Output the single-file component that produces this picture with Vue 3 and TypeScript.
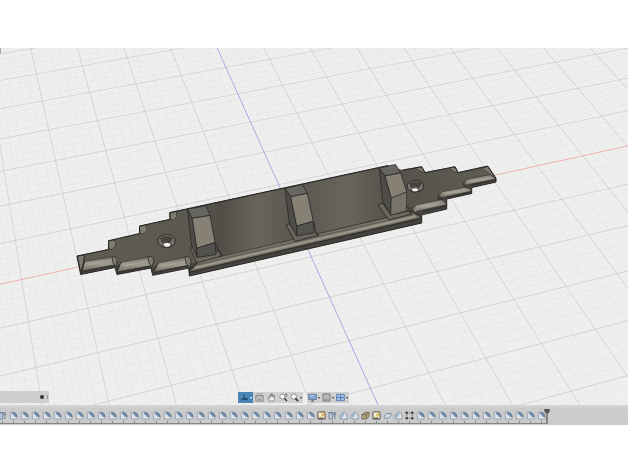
<script setup lang="ts">
interface GridLine { d: string; kind: 'fine' | 'minor' | 'major' }
type Feature = 'fillet' | 'extrude' | 'sketch' | 'chamfer' | 'box' | 'plane' | 'pattern'

// Ground plane projected to the view: u runs along the red axis, v along the blue one.
function project(u: number, v: number): string {
  const w = 1 + 0.01153 * u - 0.03678 * v
  const x = (294.4 + 54.79 * u + 5.4 * v) / w
  const y = (219.4 - 8.8 * u + 27.945 * v) / w
  return `${x.toFixed(2)} ${y.toFixed(2)}`
}

function segment(u1: number, v1: number, u2: number, v2: number): string {
  return `M${project(u1, v1)}L${project(u2, v2)}`
}

const gridLines: GridLine[] = []
for (let i = -140; i <= 140; i++) {
  const kind = i % 10 === 0 ? 'major' : i % 2 === 0 ? 'minor' : 'fine'
  const t = i / 10
  if (i === 0) continue
  gridLines.push({ d: segment(t, -14, t, 9), kind })
  if (i <= 90) gridLines.push({ d: segment(-14, t, 14, t), kind })
}
const redAxis = segment(-14, 0, 14, 0)
const blueAxis = segment(0, -14, 0, 9)

const features: Feature[] = [
  'extrude',
  ...Array<Feature>(28).fill('fillet'),
  'sketch', 'extrude', 'chamfer', 'chamfer', 'box', 'sketch', 'plane', 'chamfer', 'pattern',
  ...Array<Feature>(12).fill('fillet'),
]
</script>

<template>
  <main class="app">
    <section class="viewport" aria-label="Model view">
      <svg class="scene" viewBox="0 48 628 357" preserveAspectRatio="xMidYMid slice" aria-hidden="true">
        <defs>
          <linearGradient id="plate" x1="0" y1="0" x2="1" y2="0">
            <stop offset="0" stop-color="#605c54" />
            <stop offset=".28" stop-color="#5b5850" />
            <stop offset=".34" stop-color="#504d47" />
            <stop offset=".43" stop-color="#68645b" />
            <stop offset=".53" stop-color="#595650" />
            <stop offset=".65" stop-color="#69655c" />
            <stop offset=".75" stop-color="#54514a" />
            <stop offset="1" stop-color="#605d55" />
          </linearGradient>
          <linearGradient id="bevel" x1="0" y1="0" x2="0" y2="1">
            <stop offset="0" stop-color="#77736a" />
            <stop offset=".5" stop-color="#a19c90" />
            <stop offset="1" stop-color="#6f6b62" />
          </linearGradient>
        </defs>

        <g class="grid">
          <path v-for="(line, i) in gridLines" :key="i" :d="line.d" :class="line.kind" />
          <path :d="redAxis" class="red" />
          <path :d="blueAxis" class="blue" />
        </g>
        <path d="M0 48h1v6H0z" fill="#aaa" />

        <g class="model">
          <path class="side" d="M76.7 256 108.5 249.3 108.3 240.7 139.5 233.5 139.3 226 170 219.3 169.3 212.5 388 165.5 401 169.8 421.7 166.7 425 172.5 455 166.7 458.3 172.5 487.7 166 496 178.3 496 182 471.7 187.5V193.5L446.7 199V209L421.7 214.5V223L189.3 276 188 268 152.7 275.3 151 268 117 274.5 115 267.5 80.7 274.5z" />
          <path fill="url(#plate)" d="M77.5 256.3 109.5 250 109 241.3 140.5 234 140 226.6 171 220 170.3 213.3 388 166.5 402 170.5 421 167.6 425 173.4 454 167.7 458 173.4 487 167.2 494 176 466 182 463 189 440 193 436 202 416 206 412 211 202 261 188 264 185 260 152 267 147 259 118 265 113 257 84 263z" />

          <g class="corner">
            <path d="M77.5 256.2 84.5 255 82 269 80.5 270.5z" />
            <path d="M108.5 241 114.5 240 116 245 112 249.5 108.8 249z" />
            <path d="M139.5 226.5 146 225 147 231 143 234 139.8 233.3z" />
            <path d="M169.7 213 176.5 211.5 176.5 217 173 220.5 170.3 219z" />
            <path d="M415 168 421.7 167 425 172.5 422 172z" />
            <path d="M449 168 454.7 167 458 172.5 455 172.5z" />
            <path d="M482 168 487.5 166.7 496 178.5 491 175z" />
          </g>

          <g class="bevel">
            <path d="M84.7 261.5 113.5 256.5 118.5 258.5 116.5 264.5 82.3 271z" />
            <path d="M121 262.5 149 256.8 154 259 152 265.5 117.3 272z" />
            <path d="M158.5 263 186.5 257 191 259.5 190 265 153.5 272z" />
            <path class="long" d="M199 261.5 412 212 421.5 217.7 189.5 271.8z" />
            <path d="M413 208.5 417 204.8 442 199.2 446.7 204.5 418 211 414 213z" />
            <path d="M438.5 196 442 192 467 186.5 471.7 191 443 197.5z" />
            <path d="M464 183.5 467 179.5 490 174.5 496 178.8 466 185.2z" />
          </g>
          <path class="shine" d="M88 264.5 114 259.5M124 266 149 260.5M161 266.5 187 261M420 207 440 202.5M445 194 466 189.3M468 182.5 490 177.5" />
          <path class="shine broad" d="M195 267.7 416 216.2" />
          <g class="joint">
            <path d="M112 256Q116 256 117 260L116 267 113 263z" />
            <path d="M148 256Q153 256 154 260L152 267 149 263z" />
            <path d="M185 256.5Q190 256 191 260L190 268 186 263z" />
            <path d="M412 207Q409 210 414 213L420 215M438 194Q437 199 443 200M464 182Q462 187 468 188" />
            <path d="M84.5 255 84 263 81 271M121 262 117 270M158 263 154 271M199 261 190 270" />
          </g>
          <path class="edge" d="M189.5 272.3 421.5 218.3M81 272 115 265M117 272.5 150 266M153 273 187 266M422 212 446.5 206M447 197.5 471.5 191.8M472 185 496 179.5" />
          <path class="edge thin" d="M196 265 413 214.4" />
          <path class="edge strong" d="M77 256 108.5 249.5V240.7L139.5 233.5V226L170 219.3V212.5L388 165.5M403 170 421.7 166.7 425 172.5 455 166.7 458.3 172.5 487.7 166 496 178.3V182L471.7 187.5V193.5L446.7 199V209L421.7 215V223L189.3 276V268L152.7 275.3 151 268 117 274.5 115 267.5 80.7 274.5 77 256" />

          <g class="hole">
            <ellipse cx="166.5" cy="241" rx="8.7" ry="6.5" />
            <path d="M160 238Q166 234 173 238L170 243Q166 240 162 243z" />
            <ellipse class="through" cx="167" cy="244.8" rx="4" ry="2.6" />
            <ellipse cx="415.3" cy="186.2" rx="8.3" ry="5.8" />
            <path d="M409 183Q415 180 422 183L419 188Q415 185 411 188z" />
            <ellipse class="through" cx="415" cy="189.8" rx="3.6" ry="2.2" />
          </g>

          <g class="post">
            <path class="collar" d="M190 247 193 245 198 256 219.5 251 222 256 196.5 263z" />
            <path class="left" d="M187.5 209.3 192.3 218.3 196.7 248.3 197.3 257.5 191.7 246z" />
            <path class="top" d="M187.5 209.3 206 205.7 210 215.5 192.3 218.3z" />
            <path class="front" d="M192.3 218.3 210 215.5 215 242.5 196.7 248.3z" />
            <path class="under" d="M196.7 248.3 215 242.5 216 254.5 197.3 257.5z" />
            <path class="rib" d="M215 243 221.5 256.5" />
          </g>
          <g class="post">
            <path class="collar" d="M286 225 290 223.5 297 235 314 231.5 319 235 295 241.5z" />
            <path class="left" d="M285 188.3 290.7 196.7 296.7 226 296.7 236 289.3 223.5z" />
            <path class="top" d="M285 188.3 302.3 184.5 307.3 193.3 290.7 196.7z" />
            <path class="front" d="M290.7 196.7 307.3 193.3 313.3 221.3 296.7 226z" />
            <path class="under" d="M296.7 226 313.3 221.3 314 232.7 296.7 236z" />
            <path class="rib" d="M313.5 222 317 235" />
          </g>
          <g class="post">
            <path class="collar" d="M378 205 382.5 203 391 215 408 211 412 214 389 220z" />
            <path class="left" d="M379.3 168 385 176 391.3 198 390.7 215 382.7 201.5z" />
            <path class="top" d="M379.3 168 395.5 164.5 400.7 172.8 385 176z" />
            <path class="front" d="M385 176 400.7 172.8 406.7 192 391.3 198z" />
            <path class="under lit" d="M391.3 198 406.7 192 406.3 211 390.7 215z" />
            <path class="rib" d="M407 206 411 213" />
          </g>
        </g>
      </svg>

      <aside class="comments" aria-label="Comments">
        <button class="dot" aria-label="Options"></button>
        <i class="grip"></i>
      </aside>

      <nav class="navigation" aria-label="Navigation">
        <div class="tools">
          <button class="orbit" aria-label="Orbit">
            <svg viewBox="0 0 10 10"><path d="M4.5 1v7M2 6.5h6M1 8l3-2 3 2" stroke="#15395c" stroke-width=".8" fill="none" /><path d="m7 5 2 2-2 1z" fill="#18334d" /></svg>
            <i class="caret light"></i>
          </button>
          <button aria-label="Look at">
            <svg viewBox="0 0 10 10"><path d="M1 3h8v6H1zM2 1h2M6 1h2M3 4.5h1M6 4.5h1M3 7h4" stroke="#777" fill="none" /></svg>
          </button>
          <button aria-label="Pan">
            <svg viewBox="0 0 10 10"><path d="M3 9 1 5l1-.5L3.3 6V2h1v2-3h1.2v3-2.5h1.2V5l.6-2h1v4L7 9z" fill="#f5f5f5" stroke="#666" stroke-width=".7" /></svg>
          </button>
          <button aria-label="Zoom">
            <svg viewBox="0 0 10 10"><circle cx="3.7" cy="4" r="2.8" fill="#f8f8f8" stroke="#888" /><path d="m6 6 3 3" stroke="#333" stroke-width="1.5" /><path d="M8 1v4M7 2l1-1 1 1" stroke="#444" fill="none" stroke-width=".7" /></svg>
          </button>
          <button class="wide" aria-label="Fit">
            <svg viewBox="0 0 10 10"><circle cx="4.2" cy="4" r="3" fill="#fafafa" stroke="#888" /><path d="m6 6 3 3" stroke="#333" stroke-width="1.7" /></svg>
            <i class="caret"></i>
          </button>
        </div>
        <div class="tools">
          <button class="wide" aria-label="Display settings">
            <svg viewBox="0 0 10 10"><path d="M.7 1.5h8.6v5.7H.7z" fill="#8aaad0" stroke="#5c789b" /><path d="M2 3h5" stroke="#b9d1ed" /><path d="M3 9h4M5 7v2" stroke="#536376" /></svg>
            <i class="caret"></i>
          </button>
          <button class="wide" aria-label="Grid and snaps">
            <svg viewBox="0 0 10 10"><path d="M1 1h8v8H1z" fill="#a4a6a8" stroke="#808284" /><path d="M2 3h6M2 5h6" stroke="#c6c8ca" /></svg>
            <i class="caret"></i>
          </button>
          <button class="wide" aria-label="Viewports">
            <svg viewBox="0 0 10 10"><path d="M.7 1.5h8.6v7H.7z" fill="#a7c5e9" stroke="#5078ae" /><path d="M5 1.5v7M1 5h8" stroke="#5078ae" /></svg>
            <i class="caret"></i>
          </button>
        </div>
      </nav>
    </section>

    <footer class="timeline" aria-label="Timeline">
      <div class="track">
        <button v-for="(feature, i) in features" :key="i" class="feature" :aria-label="feature">
          <svg viewBox="0 0 10 10">
            <template v-if="feature === 'fillet'">
              <path d="M1.5 9V1.5H4Q9 2 9 6.5V9z" fill="#dde3e9" stroke="#8b929a" stroke-width=".8" />
              <path d="M3.6 1.2Q8.8 1.7 9 6.7L6.2 6.5Q6 4.3 3.6 4z" fill="#6d8cae" />
              <path d="M3.6 1.2Q8.8 1.7 9 6.7" fill="none" stroke="#586e86" stroke-width=".7" />
            </template>
            <template v-else-if="feature === 'extrude'">
              <path d="M1 2h4v7H1z" fill="#b5c7d9" stroke="#697b8d" stroke-width=".8" />
              <path d="M1 2h8M7.5 9V3M6 4.5 7.5 3 9 4.5" fill="none" stroke="#56718c" stroke-width=".9" />
            </template>
            <template v-else-if="feature === 'sketch'">
              <path d="M1 1h8v8H1z" fill="#efe3b4" stroke="#454b52" />
              <path d="m2 2 3 4 4-4" stroke="#fff" fill="none" />
              <path d="M5 6 8.5 2" stroke="#d4a93b" stroke-width="1.6" />
              <path d="M2 8h5" stroke="#2b2b2b" />
            </template>
            <template v-else-if="feature === 'chamfer'">
              <path d="M1 8V5l4-4q4 1 4 5v3H4z" fill="#dfe6ed" stroke="#77818d" stroke-width=".8" />
              <path d="m1 5 4-4 1 3-3 4z" fill="#9db4cc" />
            </template>
            <template v-else-if="feature === 'box'">
              <path d="m1 4 3-2.5h5V6L6 9H1z" fill="#b3a37e" stroke="#675d45" stroke-width=".8" />
              <path d="M1 4h5v5M6 4l3-2.5" fill="none" stroke="#675d45" stroke-width=".8" />
            </template>
            <template v-else-if="feature === 'plane'">
              <path d="M1 6 4 3l5-.5V5L6 8H2z" fill="#cad8e8" stroke="#6e7f92" stroke-width=".9" />
            </template>
            <template v-else>
              <path d="M1 1h2v2H1zM7 1h2v2H7zM1 7h2v2H1zM7 7h2v2H7zM4.5 2h1M4.5 8h1M2 4.5v1M8 4.5v1" fill="#333" stroke="#444" stroke-width=".8" />
            </template>
          </svg>
        </button>
        <svg class="marker" viewBox="0 0 6 16" aria-hidden="true">
          <path d="M0 0h6v2L4 5H2L0 2z" fill="#555" /><path d="M3 4v12" stroke="#666" stroke-width="1.4" />
        </svg>
      </div>
    </footer>
  </main>
</template>

<style>
body { margin: 0; background: #fff; }
</style>

<style scoped>
.app { box-sizing: border-box; min-height: 100vh; padding: 48px 0 47px; display: flex; flex-direction: column; background: #fff; font-family: "Liberation Sans", sans-serif; }
.viewport { position: relative; flex: 1; min-height: 200px; display: flex; align-items: flex-end; overflow: hidden; background: #efefef; }
.scene { position: absolute; inset: 0; width: 100%; height: 100%; }
button { padding: 0; border: 0; background: none; }

.grid path { fill: none; }
.grid .fine { stroke: #e9eaea; stroke-width: .4; }
.grid .minor { stroke: #e2e3e4; stroke-width: .6; }
.grid .major { stroke: #cccdcd; stroke-width: .8; }
.grid .red { stroke: #efaaa7; stroke-width: .9; }
.grid .blue { stroke: #a8a8e6; stroke-width: 1; }

.model { stroke-linejoin: round; }
.side { fill: #45433d; }
.corner path { fill: #7d7a72; stroke: #2d2c29; stroke-width: .6; }
.bevel path { fill: url(#bevel); stroke: #34322e; stroke-width: .6; }
.bevel .long { fill: #79756b; }
.shine { fill: none; stroke: #aea99d; stroke-width: 1; }
.shine.broad { stroke: #9c978b; stroke-width: 2; }
.joint path { fill: #817c71; stroke: #292825; stroke-width: .8; }
.joint path:nth-child(n+4) { fill: none; }
.edge { fill: none; stroke: #2b2a27; stroke-width: .8; }
.edge.thin { stroke: #47443e; stroke-width: .6; }
.edge.strong { stroke: #252522; stroke-width: 1; }
.hole ellipse { fill: #77736a; stroke: #24231f; stroke-width: .9; }
.hole path { fill: #46433d; }
.hole .through { fill: #f4f4f4; }
.post path { stroke: #282724; stroke-width: .8; }
.post .collar { fill: #6b675e; }
.post .left { fill: #4e4c46; }
.post .top { fill: #686660; }
.post .front { fill: #878175; }
.post .under { fill: #53524e; }
.post .under.lit { fill: #79746a; stroke-width: .6; }
.post .rib { fill: none; }

.comments { position: relative; box-sizing: border-box; width: 49px; height: 12px; margin-bottom: 2px; padding-right: 1px; display: flex; align-items: center; justify-content: flex-end; gap: 3px; background: #cfcfcf; }
.dot { width: 4px; height: 4px; border-radius: 50%; background: #333; }
.grip { width: 1px; height: 4px; background: #999; }

.navigation { position: absolute; left: 0; right: 0; bottom: 2px; padding-right: 41px; display: flex; justify-content: center; gap: 4px; }
.tools { display: flex; height: 11px; background: #d0d0d0; }
.tools button { width: 12px; display: flex; align-items: center; justify-content: center; gap: 1px; }
.tools .wide { width: 14px; }
.tools .orbit { width: 15px; background: #4b86b8; }
.tools svg { width: 9px; height: 9px; flex: none; }
.caret { width: 0; border: 1px solid transparent; border-top: 2px solid #333; border-bottom: 0; }
.caret.light { border-top-color: #fff; }

.timeline { height: 20px; overflow: hidden; background: linear-gradient(#d6d6d6, #cbcbcb 4px); }
.track { display: flex; align-items: flex-start; margin-left: -3px; padding-top: 4px; }
.feature { position: relative; flex: none; width: 11px; height: 15px; padding-top: 2px; border-bottom: 1px solid #858585; display: flex; flex-wrap: wrap; justify-content: center; box-sizing: border-box; }
.feature::after { content: ""; width: 1px; height: 2px; background: #858585; position: absolute; left: 5px; bottom: 0; }
.feature svg { width: 9px; height: 9px; }
.marker { width: 6px; height: 15px; flex: none; margin-left: -3px; }
</style>
